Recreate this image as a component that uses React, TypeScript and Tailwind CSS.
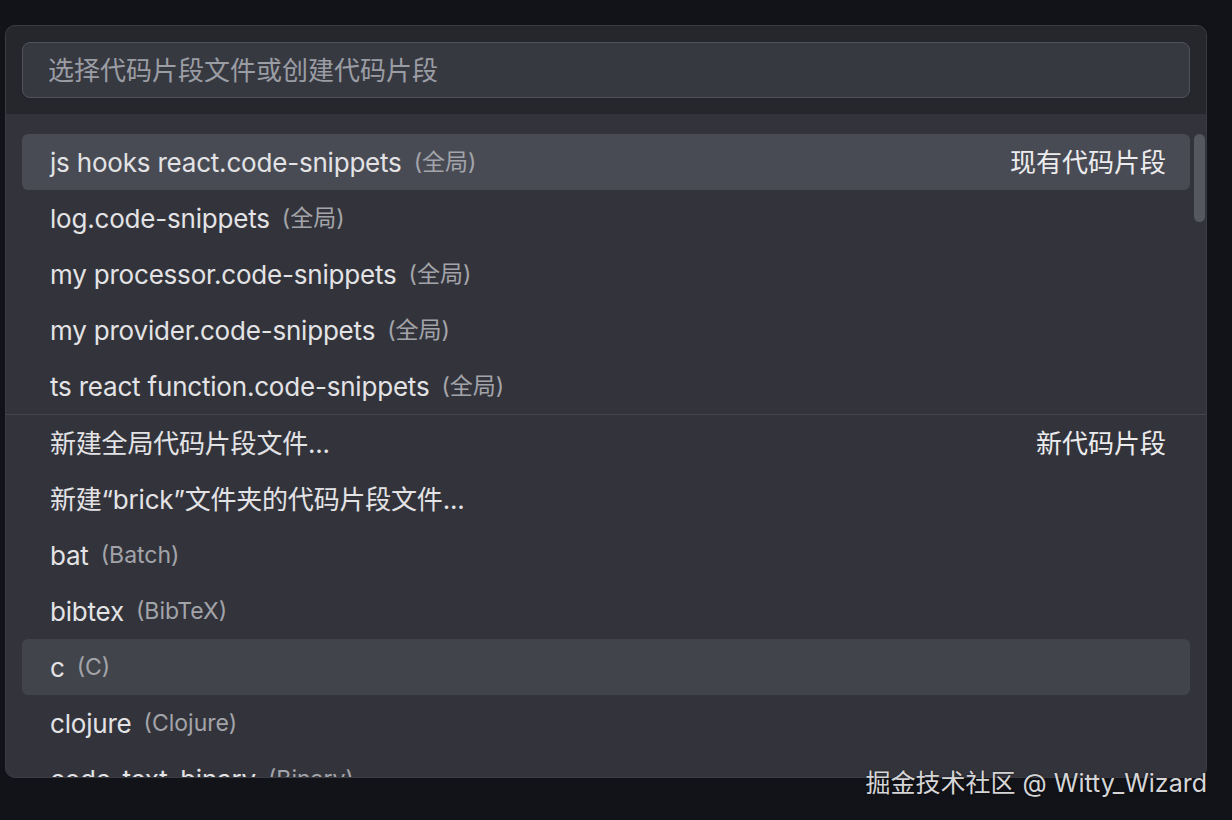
const FONT = { fontFamily: '"Inter", "Noto Sans CJK SC", sans-serif' }

type Row = { label: string; desc?: string; right?: string; active?: 'focus' | 'hover' }

const EXISTING: Row[] = [
  { label: 'js hooks react.code-snippets', desc: '(全局)', right: '现有代码片段', active: 'focus' },
  { label: 'log.code-snippets', desc: '(全局)' },
  { label: 'my processor.code-snippets', desc: '(全局)' },
  { label: 'my provider.code-snippets', desc: '(全局)' },
  { label: 'ts react function.code-snippets', desc: '(全局)' },
]

const CREATE: Row[] = [
  { label: '新建全局代码片段文件...', right: '新代码片段' },
  { label: '新建“brick”文件夹的代码片段文件...' },
  { label: 'bat', desc: '(Batch)' },
  { label: 'bibtex', desc: '(BibTeX)' },
  { label: 'c', desc: '(C)', active: 'hover' },
  { label: 'clojure', desc: '(Clojure)' },
  { label: 'code_text_binary', desc: '(Binary)' },
]

function Item({ row }: { row: Row }) {
  return (
    <div className="px-4">
      <div
        className={
          'flex h-14 items-center rounded-md pl-7 pr-6 ' +
          (row.active === 'focus' ? 'bg-[#494b54]' : row.active === 'hover' ? 'bg-[#42444c]' : '')
        }
      >
        <span className="text-[26px] tracking-[-0.2px] text-[#e3e3e6]">{row.label}</span>
        {row.desc && <span className="ml-3 text-[23px] text-[#a3a4aa]">{row.desc}</span>}
        {row.right && <span className="ml-auto text-[26px] text-[#ececee]">{row.right}</span>}
      </div>
    </div>
  )
}

export default function App() {
  return (
    <div className="relative h-[820px] w-[1232px] overflow-hidden bg-[#121318] pl-[5px] pt-[25px]" style={FONT}>
      <div className="flex h-[753px] w-[1202px] flex-col overflow-hidden rounded-[10px] border border-[#3b3c42] bg-[#33343b]">
        <div className="bg-[#26272c] px-4 py-4">
          <div className="flex h-14 items-center rounded-lg border border-[#51535a] bg-[#373941] px-[25px] text-[26px] text-[#9b9da4]">
            选择代码片段文件或创建代码片段
          </div>
        </div>
        <div className="relative flex-1 overflow-hidden pt-5">
          {EXISTING.map((r) => (
            <Item key={r.label} row={r} />
          ))}
          <div className="border-t border-[#46474e]">
            {CREATE.map((r) => (
              <Item key={r.label} row={r} />
            ))}
          </div>
          <div className="absolute right-[1px] top-5 h-[88px] w-[11px] rounded-full bg-[#56585f]" />
        </div>
      </div>
      <div className="absolute right-[25px] top-[765px] text-[25px] text-[#d6d6d8] [text-shadow:0_0_2px_rgba(0,0,0,0.6)]">
        掘金技术社区 @ Witty_Wizard
      </div>
    </div>
  )
}
